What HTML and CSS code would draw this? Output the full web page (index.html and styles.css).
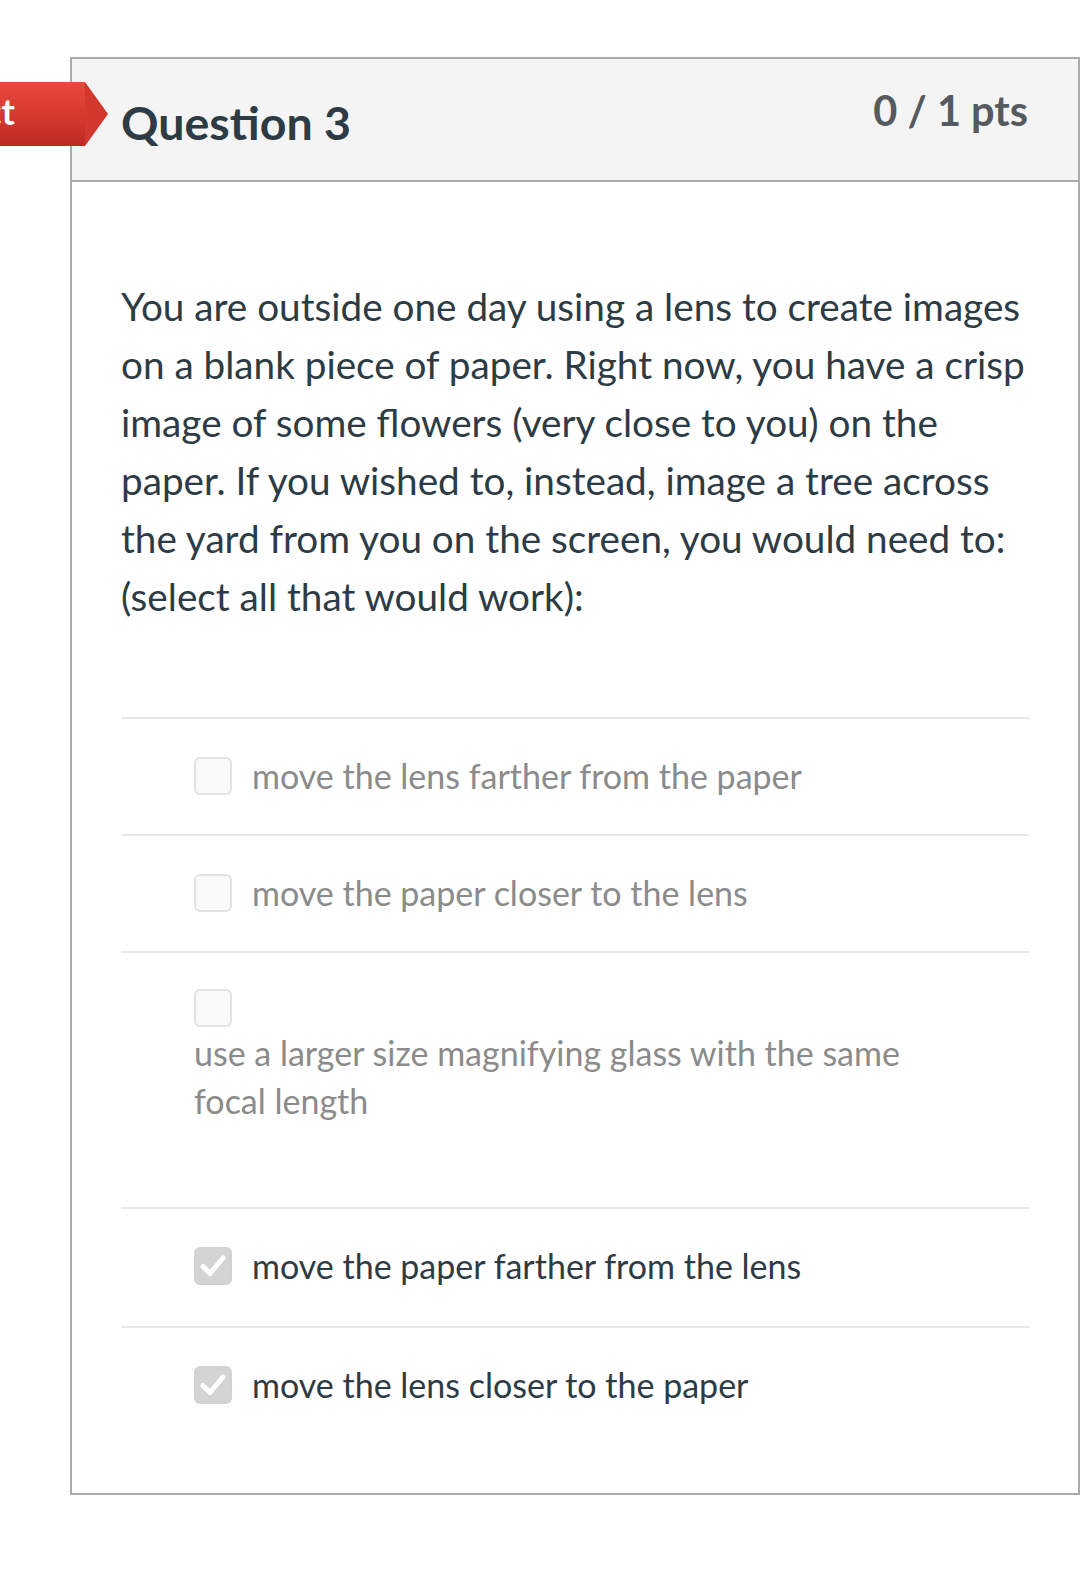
FILE: index.html
```html
<!DOCTYPE html>
<html>
<head>
<meta charset="utf-8">
<link rel="stylesheet" href="styles.css">
</head>
<body>
<div class="page">
  <div class="flag"><span class="flag-text">Incorrect</span></div>
  <div class="card">
    <div class="card-header">
      <div class="q-title">Question 3</div>
      <div class="q-pts">0 / 1 pts</div>
    </div>
    <div class="card-body">
      <div class="q-text">You are outside one day using a lens to create images on a blank piece of paper. Right now, you have a crisp image of some flowers (very close to you) on the paper. If you wished to, instead, image a tree across the yard from you on the screen, you would need to: (select all that would work):</div>
      <div class="answers">
        <div class="answer">
          <span class="box"></span>
          <span class="label">move the lens farther from the paper</span>
        </div>
        <div class="answer">
          <span class="box"></span>
          <span class="label">move the paper closer to the lens</span>
        </div>
        <div class="answer answer-stack">
          <span class="box"></span>
          <span class="label label-wrap">use a larger size magnifying glass with the same focal length</span>
        </div>
        <div class="answer selected tall">
          <span class="box checked"><svg viewBox="0 0 38 38" width="38" height="38"><path d="M9 19.5 L16 26.5 L29 11" fill="none" stroke="#fff" stroke-width="5" stroke-linecap="round" stroke-linejoin="round"/></svg></span>
          <span class="label">move the paper farther from the lens</span>
        </div>
        <div class="answer selected last">
          <span class="box checked"><svg viewBox="0 0 38 38" width="38" height="38"><path d="M9 19.5 L16 26.5 L29 11" fill="none" stroke="#fff" stroke-width="5" stroke-linecap="round" stroke-linejoin="round"/></svg></span>
          <span class="label">move the lens closer to the paper</span>
        </div>
      </div>
    </div>
  </div>
</div>
</body>
</html>
```

FILE: styles.css
```css
html, body {
  margin: 0;
  padding: 0;
  background: #ffffff;
}
body {
  font-family: Lato, "Open Sans", "Liberation Sans", sans-serif;
  color: #2d3b45;
  width: 1080px;
  height: 1571px;
  overflow: hidden;
}
.page {
  position: relative;
  padding-top: 57px;
}
.flag {
  position: absolute;
  left: 0;
  top: 82px;
  width: 85px;
  height: 64px;
  background: linear-gradient(180deg, #e8493e 0%, #d53a30 50%, #bd2a22 100%);
  z-index: 2;
}
.flag::after {
  content: "";
  position: absolute;
  left: 85px;
  top: 0;
  width: 0;
  height: 0;
  border-top: 32px solid transparent;
  border-bottom: 32px solid transparent;
  border-left: 23px solid #d3382f;
}
.flag-text {
  position: absolute;
  right: 70px;
  top: 0;
  line-height: 58px;
  font-size: 36px;
  font-weight: 700;
  color: #ffffff;
  white-space: nowrap;
}
.card {
  margin-left: 70px;
  width: 1006px;
  border: 2px solid #ababab;
  background: #ffffff;
}
.card-header {
  display: flex;
  justify-content: space-between;
  align-items: flex-start;
  height: 121px;
  padding: 0 50px 0 49px;
  background: #f4f4f4;
  border-bottom: 2px solid #ababab;
}
.q-title {
  margin-top: 41px;
  font-size: 46.5px;
  line-height: 44px;
  font-weight: 700;
  color: #2d3b45;
}
.q-pts {
  margin-top: 30px;
  font-size: 41.5px;
  line-height: 42px;
  font-weight: 700;
  color: #555a5e;
}
.card-body {
  padding: 95px 49px 0 49px;
}
.q-text {
  font-size: 38.7px;
  line-height: 58px;
  color: #2d3b45;
}
.answers {
  margin-top: 92px;
}
.answer {
  display: flex;
  align-items: center;
  gap: 20px;
  padding: 33px 0 34px 73px;
  border-top: 2px solid #e8e8e8;
}
.answer.tall {
  padding-bottom: 36px;
}
.answer.last {
  padding-bottom: 84px;
}
.answer-stack {
  flex-direction: column;
  align-items: flex-start;
  gap: 2px;
  padding-bottom: 82px;
}
.answer-stack .box {
  margin-top: 3px;
}
.box {
  flex: none;
  box-sizing: border-box;
  width: 38px;
  height: 38px;
  border: 2px solid #e2e2e2;
  border-radius: 6px;
  background: #fafafa;
}
.box.checked {
  border-color: #d2d2d2;
  background: #d4d4d4;
}
.box svg {
  display: block;
  margin: -2px;
}
.label {
  font-size: 34px;
  line-height: 48px;
  color: #8b8b8b;
}
.label-wrap {
  width: 730px;
}
.selected .label {
  color: #2d3b45;
}
```
